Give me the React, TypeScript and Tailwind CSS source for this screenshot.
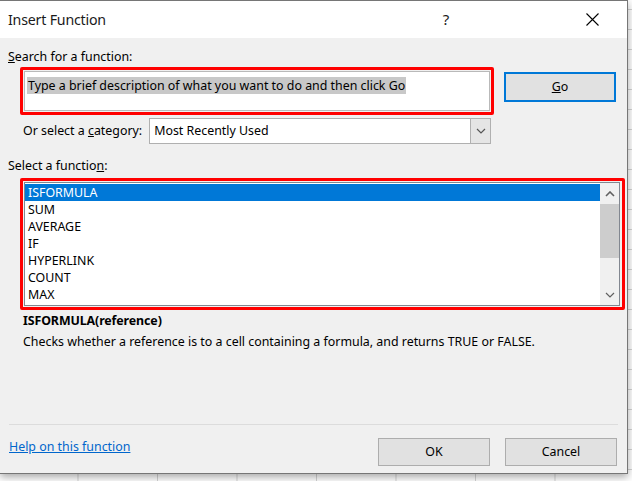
import { FC } from "react";

const functions = ["ISFORMULA", "SUM", "AVERAGE", "IF", "HYPERLINK", "COUNT", "MAX"];

const ChevronDown: FC<{ className?: string }> = ({ className }) => (
  <svg width="10" height="6" viewBox="0 0 10 6" className={className}>
    <path d="M1 1 L5 5 L9 1" fill="none" stroke="currentColor" strokeWidth="1.2" />
  </svg>
);

const ChevronUp: FC<{ className?: string }> = ({ className }) => (
  <svg width="10" height="6" viewBox="0 0 10 6" className={className}>
    <path d="M1 5 L5 1 L9 5" fill="none" stroke="currentColor" strokeWidth="1.6" />
  </svg>
);

export default function App() {
  return (
    <div className="relative w-[632px] h-[481px] overflow-hidden bg-white bg-[linear-gradient(to_right,#d4d4d4_1px,transparent_1px),linear-gradient(to_bottom,#d4d4d4_1px,transparent_1px)] bg-[size:79.5px_20px] bg-[position:-2px_9px] font-['Segoe_UI','Noto_Sans',sans-serif] text-[12.4px] text-black">
      {/* dialog */}
      <div className="absolute left-0 top-0 w-[628px] h-[474px] flex flex-col bg-[#f0f0f0] border-t border-r border-b border-[#767676] shadow-[0_3px_8px_rgba(0,0,0,0.35)]">
        {/* title bar */}
        <div className="h-[37px] bg-white flex items-center pl-[8px] shrink-0">
          <div className="text-[14.2px] text-[#1a1a1a] tracking-[-0.2px]">Insert Function</div>
          <div className="ml-auto w-[48px] text-center text-[15px] text-[#1a1a1a]">?</div>
          <div className="w-[30px] ml-[107px] flex justify-center">
            <svg width="13" height="13" viewBox="0 0 13 13">
              <path d="M0.5 0.5 L12.5 12.5 M12.5 0.5 L0.5 12.5" stroke="#000" strokeWidth="1.1" />
            </svg>
          </div>
          <div className="w-[20px]" />
        </div>

        {/* body */}
        <div className="flex flex-col pl-[8px] pr-[8px] pt-[11px] flex-1">
          <div className="leading-[16px]">
            <u>S</u>earch for a function:
          </div>

          <div className="flex mt-[2px]">
            <div className="ml-[12px] w-[474px] h-[48px] border-[3px] border-[#ff0000] rounded-[2px] p-[1px]">
              <div className="w-full h-full bg-white border border-[#b9b9b9] pl-[2px] pt-[5px]">
                <span className="bg-[#c8c8c8] leading-[17px] px-[1px] inline-block">
                  Type a brief description of what you want to do and then click Go
                </span>
              </div>
            </div>
            <div className="ml-[10px] mt-[5px] w-[112px] h-[30px] bg-[#e1e1e1] border-2 border-[#0078d7] flex items-center justify-center">
              <span>
                <u>G</u>o
              </span>
            </div>
          </div>

          <div className="flex items-center mt-[3px] ml-[15px]">
            <div>
              Or select a <u>c</u>ategory:
            </div>
            <div className="ml-[7px] w-[342px] h-[26px] bg-white border border-[#b0b0b0] flex items-stretch">
              <div className="flex-1 flex items-center pl-[4px]">Most Recently Used</div>
              <div className="w-[20px] bg-[#e5e5e5] border-l border-[#b0b0b0] flex items-center justify-center text-[#555]">
                <ChevronDown />
              </div>
            </div>
          </div>

          <div className="mt-[14px] leading-[16px]">
            Select a functio<u>n</u>:
          </div>

          <div className="mt-[4px] ml-[12px] w-[605px] h-[132px] border-[3px] border-[#ff0000] rounded-[2px] pl-[1px] pt-[1px]">
            <div className="w-[596px] h-[124px] bg-white border border-[#828790] flex">
              <div className="flex-1 pt-[1px] flex flex-col">
                {functions.map((f, i) => (
                  <div
                    key={f}
                    className={
                      i === 0
                        ? "h-[17px] leading-[17px] pl-[3px] bg-[#0078d7] text-white"
                        : "h-[17px] leading-[17px] pl-[3px]"
                    }
                  >
                    {f}
                  </div>
                ))}
              </div>
              <div className="w-[19px] bg-[#f0f0f0] flex flex-col items-center">
                <div className="h-[21px] flex items-center justify-center text-[#606060]">
                  <ChevronUp />
                </div>
                <div className="w-full h-[54px] bg-[#cdcdcd]" />
                <div className="flex-1" />
                <div className="h-[21px] flex items-center justify-center text-[#606060]">
                  <ChevronDown />
                </div>
              </div>
            </div>
          </div>

          <div className="mt-[2px] ml-[15px] font-bold leading-[17px] tracking-[-0.1px]">
            ISFORMULA(reference)
          </div>
          <div className="mt-[4px] ml-[15px] leading-[17px]">
            Checks whether a reference is to a cell containing a formula, and returns TRUE or FALSE.
          </div>

          <div className="mt-[74px] ml-[1px] mr-[1px] h-px bg-[#dcdcdc]" />

          <div className="flex items-center mt-[13px]">
            <a className="ml-[1px] -mt-[9px] text-[#0066cc] underline">Help on this function</a>
            <div className="ml-auto w-[112px] h-[28px] bg-[#e1e1e1] border border-[#adadad] flex items-center justify-center">
              OK
            </div>
            <div className="ml-[15px] w-[112px] h-[28px] bg-[#e1e1e1] border border-[#adadad] flex items-center justify-center">
              Cancel
            </div>
            <div className="w-[2px]" />
          </div>
        </div>
      </div>
    </div>
  );
}
